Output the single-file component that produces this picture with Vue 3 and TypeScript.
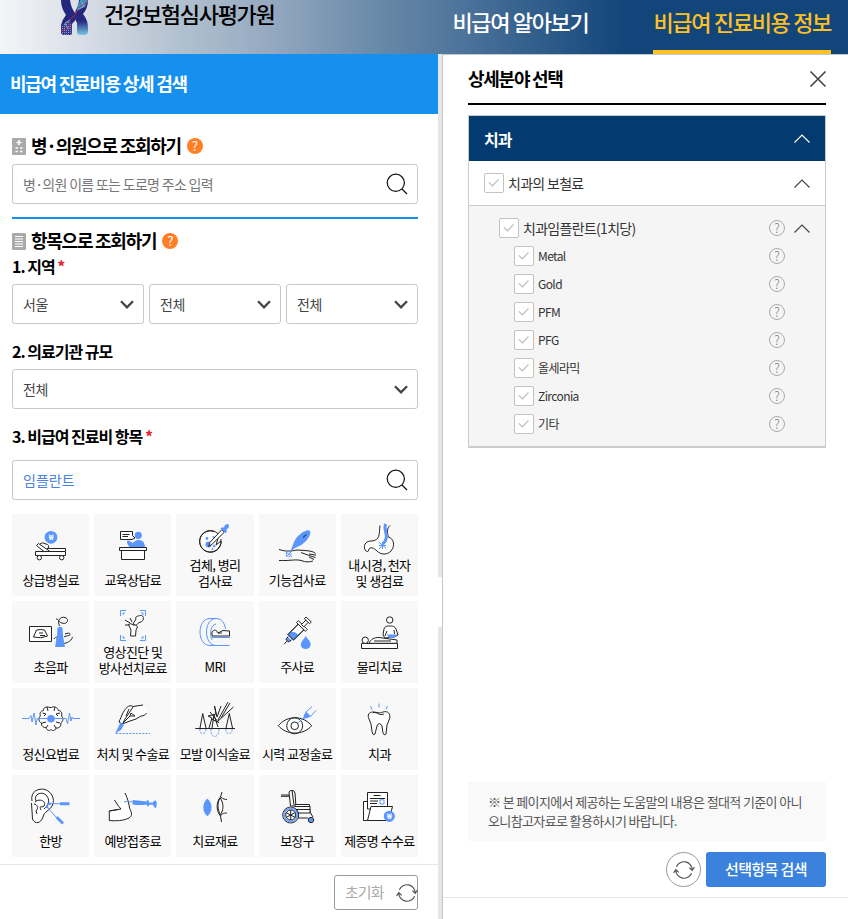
<script setup lang="ts">
import { ref } from 'vue'

type Kind = 'line' | 'paper' | 'blueLine' | 'blue' | 'dash' | 'thick'
interface Shape { k: Kind; d: string }
interface Category { label: string[]; shapes: Shape[]; won?: [number, number] }

const s = (k: Kind, d: string): Shape => ({ k, d })
const dot = (x: number, y: number, r: number): string =>
  `M${x - r} ${y}a${r} ${r} 0 1 0 ${2 * r} 0a${r} ${r} 0 1 0 ${-2 * r} 0Z`

const categories: Category[] = [
  { label: ['상급병실료'], won: [39, 23.3], shapes: [
    s('blue', dot(39, 23.3, 6.4)),
    s('paper', 'M35 37.5V34.5H53.5V37.5'), s('paper', 'M23.5 37.5H53.5V41.5H23.5Z'),
    s('paper', 'M24.5 31.5L26.5 29.5L38 37.5H32Z'), s('line', 'M28 30Q30 27.5 34 30Q38 31 36 34.5'),
    s('paper', dot(27.3, 43.7, 2.2)), s('paper', dot(49.7, 43.7, 2.2))] },
  { label: ['교육상담료'], shapes: [
    s('paper', 'M26.5 17.5H38.5V21.5L41 24L38 25.5H26.5Z'), s('line', 'M28.5 20.5H35.5M28.5 22.5H34'),
    s('blue', dot(44.3, 21.3, 3.6)),
    s('blue', 'M33 27.5C33 25.5 36 27 38.5 29L42 26.5C48 25 51 28 51 34H38C35 33.5 33 30 33 27.5Z'),
    s('paper', 'M27.5 36H50.5V45.5H27.5Z'), s('paper', 'M25.5 33.5H52.5V36.5H25.5Z')] },
  { label: ['검체, 병리', '검사료'], shapes: [
    s('paper', 'M43 21A10.7 10.7 0 1 0 45 27L40 31Z'), s('line', 'M38 17.5A10.7 10.7 0 1 0 44.8 25'),
    s('blue', dot(32.5, 30.5, 3)), s('blue', dot(31, 24.5, 1.4)), s('blue', dot(38.2, 32, 1.3)),
    s('blue', dot(36.5, 35, 1)), s('blue', dot(37.5, 23, 1)),
    s('paper', 'M45.8 15.7L48.3 18.2L36 30.3L32.7 32.5L34 28.3Z'),
    s('blue', 'M44.5 14.5L46.5 13L48 13.8C48.5 10.5 51 9.5 52.3 10.3C54 12 52.5 14.5 50.3 15.7L51 17.8L49.3 19Z')] },
  { label: ['기능검사료'], shapes: [
    s('line', 'M20 35.5C28 38 32 37 38 36L46 36.5C50 37 54 37 56.5 39.5M42 38.5L52 42.2L56.5 43.5M50 40L57 41.2M50 43L55 45.5M20 46.5C30 47 37 45 42 46.5C47 48.5 51 48 54 47'),
    s('blue', 'M31.5 37L35 28C38 22 43 17.5 48.5 16.2C51.5 15.8 52 18.5 50.5 22C47.5 27.5 42 32 37 33.5Z'),
    { k: 'paper', d: 'M44 23.5L47.5 20.5' },
    s('dash', dot(29.7, 40.2, 2.5)), s('blueLine', 'M26.7 37.5L33 43M33 37L27 43')] },
  { label: ['내시경, 천자', '및 생검료'], shapes: [
    s('paper', 'M39 11.5C38 21 39 26 31 27C25 27 23 30 23.5 34C24 38 28 38.5 27.5 36C29 32 33 34 36 37C40 41 46 41 50 37C55 31 52 24 47.3 23C46 18 46 14 49 11.5'),
    s('thick', 'M44.6 10C42 16 47 19 45 25C44 28 43 28 42 30'),
    s('blueLine', 'M37.5 28L45 34M44.5 28L38 35M41.5 29V35M38 31.5H45')] },
  { label: ['초음파'], shapes: [
    s('paper', 'M17.5 25.5H39.5V40.5H17.5Z'), s('line', 'M24.5 29Q29 28 32.5 29L35.5 35Q29 38 21.5 36ZM27 32H31M28 34.5H33'),
    s('line', 'M47.5 25C45 20 48 15 53 16.5C58 18 55 24 50 22C46 21 47 18 44 18M42 38C44 35 46 36 45 39M53 33C57 31 60 33 57 34.5C55 35 53 35 52 36M60.5 36C59 41 54 42 52 42.5'),
    s('blue', 'M45.5 27Q48 24.5 50.5 27L51 35L53 46H43L45 35Z')] },
  { label: ['영상진단 및', '방사선치료료'], shapes: [
    s('blueLine', 'M26.5 15V9.5H32M46 9.5H51.5V15M51.5 34V39.5H46M32 39.5H26.5V34M29 14V12H31M47 12H49V14M49 35V37H47M31 37H29V35'),
    s('paper', 'M39 23L42 18C40.5 15.5 44 15 46.5 14.5C50 14 50.5 19 47 21C44 21 43 24 42 24.5Z'),
    s('paper', 'M34.5 23.5Q37 21.5 39 24Q42 23 43.5 26L42 29L41.5 35H36.5L37 29Z'),
    s('line', 'M31 19L36 22M36 17L38 21M31 24L35 24')] },
  { label: ['MRI'], shapes: [
    s('blueLine', 'M40 44.5H34C27.5 44.5 24 38 24 31S27.5 17.5 34 17.5H40M40 44.5C34 44.5 30.5 38 30.5 31S34 17.5 40 17.5S48.5 22 49.5 28M36 39C33.5 34 34 24 40 23M36 36.5H54M38 44.5H53.5'),
    s('line', 'M36 35V31C38 28 41 29 42 32L47 29.5L53.5 30V35H36M42 32H46')] },
  { label: ['주사료'], shapes: [
    s('paper', 'M39.3 23L45 28.7L34.5 39L29 33.5Z'), s('blue', 'M36.5 31.5L39.5 34L34.5 39L29 33.5L32 30.5Z'),
    s('line', 'M39.3 23L29 33.5L34.5 39L45 28.7'),
    s('paper', 'M37.5 21.5L39.5 19.7L48.3 28.5L46.5 30.3Z'), s('paper', 'M42.5 23.5L47 19L49.3 21.3L44.8 25.8Z'),
    s('paper', 'M45.3 17.7L47 16L52.3 21L50.6 22.7Z'),
    s('blue', 'M28.5 35.5L32.5 39.5L29.5 41L27 38.5Z'), s('line', 'M29 35.5L27 38.5L29.5 41L32.5 39M28 40L25 43.3'),
    s('blue', 'M46.7 35C49 38.5 51.7 40.5 51.7 43.5C51.3 49.5 42 49.5 41.8 43.5C42 40.5 44.7 38.5 46.7 35Z')] },
  { label: ['물리치료'], shapes: [
    s('paper', 'M20.5 42.5H56.5V47.5H20.5Z'), s('paper', dot(24.2, 39.2, 3.2)),
    s('paper', 'M28 42.3C30 38 33 36.5 38 36.5L56 39V42.3ZM33 40H50'),
    s('paper', dot(48.7, 19, 3.2)), s('paper', 'M42 34L43 28C44 25 46 25 48.7 25S53.5 25 55 28L57 34L53 36L44 37Z'),
    s('line', 'M46 30L44 35M53 29L53.5 33'), s('blue', 'M46 33.5L56 33.5L53.5 37H48Z')] },
  { label: ['정신요법료'], shapes: [
    s('paper', 'M38 19.5C34 18 31 20 31.5 22.5C28 23 27.5 26 28.5 28C26 30 26.5 34 29.5 35C29 38 32 40 34 39.5C35 43 38 43 39 41.5C40 43 43.5 43 44 40C47 40.5 49.5 38 48.8 35C51.5 33 51.5 30 49.5 28C50.5 25 49 22.5 46.3 22.5C46 19 41 18 39.5 19.5Z'),
    s('line', 'M35 19L36 23M43 19L42 23M30.5 25L34 26L32 28M48 25L44 26L46 28M30 35L34 34M48 35L44 34M34 40L36 37M44 40L42 37'),
    s('blueLine', 'M10 30.5H17L19 27.5L20 34L22 25L24 37L25 30.5H54L55.5 36L57.5 25L59 33L60 29L61 30.5H68'),
    s('blue', dot(39, 30.7, 3.8))] },
  { label: ['처치 및 수술료'], shapes: [
    s('paper', 'M49 17L39 18.5C35 16 31 20 28 27L25 34L28 36L36 33L42 31L47 28C50 28 51 27 52.5 25'),
    s('line', 'M35 21L32 28M39 19L31 31L29 35M36 28L37 25L41 28H36L29 35'),
    s('blue', 'M26.5 34.5L30 36L27.5 41.5L21 45.8Z'), s('dash', 'M22 45.5H56')] },
  { label: ['모발 이식술료'], shapes: [
    s('line', 'M19.3 40.5H59M24 40L26.7 25.5L30 40M33 40L36 30L32 28L40 26L38.5 18L41 29L45 18M36 40L38 27L42 39M50 40L53.3 25.5L56.5 40M41 34L57.5 19M42 32L52 14M45 30L54 15M34 24L43 35M35 31L42 34'),
    s('dash', 'M24 41C23 47 30 47 30 41M35 41C34 51 43 51 43 41M50 41C49 47 57 47 56 41')] },
  { label: ['시력 교정술료'], shapes: [
    s('paper', 'M19.3 37.8C28 27 44 27 52.7 37.8C44 47.5 28 47.5 19.3 37.8Z'),
    s('line', dot(35.7, 37.8, 8)), s('line', dot(35.7, 37.8, 3.8)),
    s('blueLine', 'M39.5 34.5L45.5 29M47 24L53 18.5M51.5 28.5L57 22.5'),
    s('blue', 'M47 23.5L52 28.5L47.5 30.3L44.3 30.8L45 27Z')] },
  { label: ['치과'], shapes: [
    s('paper', 'M28 31C26 27 28 24 32 24C36 24 38 26 42 24C47 22.5 50 26 48.5 31L46 37L45 46Q43 48 42 45L41 38Q38 33 36 38L34 46Q31.5 48 31 43L30 36Z'),
    s('line', 'M32 24.5C37 24 38 28 43 26'), s('blueLine', 'M29.5 18L31 21.5M38 15.5V19.5M46.5 18L45 21.5')] },
  { label: ['한방'], shapes: [
    s('paper', 'M20 26C18 16 27 13 33 14.5C40 17 43 24 40.5 30C38 36 32 36 31 42C29 48 23 50 20.5 44L19.5 28'),
    s('line', 'M24 26C21 19 30 16 34 20C39 25 36 31 32 34M23 27C27 23 35 26 32 31C29 33 27 30 29 35M22 29C25 29 27 33 24 36L25 39'),
    s('blue', dot(37.3, 28.7, 1.5)), s('blue', dot(35, 31.8, 1.5)), s('blueLine', 'M38 28.7H48M35 32L44 42'),
    s('thick', 'M48 28.7H57.5M44.5 42L51 48.5')] },
  { label: ['예방접종료'], shapes: [
    s('paper', 'M31 18C34 24 35 29 35.5 33C38 38 38.5 41 35 43C29 46 22 46 15.3 45.5V36L24 34.5'),
    s('line', 'M15.3 36L27 34Q24 31 20.5 25'),
    s('blueLine', 'M30 26.7H38'), s('blue', 'M38.5 25Q46 25.5 53 26.5L53.2 29.5Q46 30.5 38.5 29.5ZM53 25.2Q55 24.5 55.2 28T54 31.5Q52 31 53 25.2ZM55 27.5H59Q59.5 25 62 25.7Q63.5 28 62 33Q60 33.5 59 29.8H55Z')] },
  { label: ['치료재료'], shapes: [
    s('blue', 'M31.3 23.5C37 28 37 37 31.3 41.2C26 37 26 28 31.3 23.5Z'),
    s('line', 'M46 17L44.5 22C40 27 40 36 44.5 41L45.5 47M44.5 22C47 24 49 24.5 51 24.5M44.5 41C46 38 49 38 51 38M44 23C48 28 48 35 44 40M43.5 24C41 29 42 35 44 39')] },
  { label: ['보장구'], shapes: [
    s('line', 'M22 20H30M22 21.3H30M30 17Q31 15 33 15.5L35 30M30 17L31.5 31M33 15.5Q35 15 36 18L37 32M31.5 31H51V37L54 42'),
    s('paper', 'M36 29.5H50.5V31.5H36Z'), s('paper', 'M37 34.5H51V38H39Z'), s('line', 'M39 43H49'),
    s('line', dot(31.7, 40, 8)), s('blueLine', dot(31.7, 40, 7)), s('blueLine', dot(31.7, 40, 6.2)), s('line', dot(31.7, 40, 5)),
    s('line', 'M31.7 35V45M27 37.5L36.3 42.5M36.3 37.5L27 42.5'), s('blue', dot(52, 45, 2.3)), s('line', dot(52, 45, 2.7))] },
  { label: ['제증명 수수료'], won: [48.3, 41.3], shapes: [
    s('paper', 'M22.5 45.5V26.5H30V45.5Z'), s('paper', 'M26.5 17.5H46.5V34H26.5Z'),
    s('line', 'M32.5 20.5H39.5M29 23.5H44M29 26H37M29 28.5H36'), s('blueLine', 'M39 24.8H43V29H39Z'),
    s('paper', 'M26.5 45.5L30 31.5H51.5L48 45.5Z'), s('blue', dot(48.3, 41.3, 5.6))] },
]

const regions = ['서울', '전체', '전체']
const items = ['Metal', 'Gold', 'PFM', 'PFG', '올세라믹', 'Zirconia', '기타']
const cycle = 'M2.4 6.8A8.25 8.25 0 0 1 18.25 10M17.6 13.2A8.25 8.25 0 0 1 1.75 10M15.3 7.6L18.2 10.3L20.4 7.2M4.7 12.4L1.8 9.7L-.4 12.8'
const hospital = ref('')
const keyword = ref('임플란트')
</script>

<template>
  <div class="page">
    <header class="top">
      <div class="brand">
        <svg class="emblem" width="30" height="36" viewBox="0 0 30 36">
          <defs>
            <linearGradient id="leg" x1="0" y1="0" x2="0" y2="1">
              <stop offset="0" stop-color="#25267e" /><stop offset=".6" stop-color="#27277f" /><stop offset="1" stop-color="#72cbe4" />
            </linearGradient>
            <pattern id="mesh" width="2" height="2" patternUnits="userSpaceOnUse">
              <rect width="2" height="2" fill="#34398c" /><rect width="1" height="1" fill="#8f9bcb" />
            </pattern>
          </defs>
          <path d="M1 0H10Q11 8 15 13Q18 19 12 24V33Q12 35 9 35H4Q1 35 1 31V25Q2 20 6 15Q1 8 1 0Z" fill="#25267e" />
          <path d="M28 0Q28 8 23 14Q28 20 28 28V31Q28 35 24 35H20Q17 35 17 31V23Q13 16 16 10Q19 5 19 0Z" fill="url(#leg)" />
          <path d="M1 26L9 20L12 25V33Q11 35 5 35Q1 35 1 31Z" fill="url(#mesh)" />
          <path d="M20 0H28L25 7L18 10L17 8Z" fill="#488bb6" />
          <path d="M28 2L20 7L14 16L7 22L10 27L1 31" fill="none" stroke="#c62450" stroke-width=".9" />
          <path d="M21 1L24 6L17 10M10 20L5 23L8 29" fill="none" stroke="#62bfd8" stroke-width=".9" />
        </svg>
        <span class="brand-name">건강보험심사평가원</span>
      </div>
      <nav class="menu">
        <a>비급여 알아보기</a>
        <a class="current">비급여 진료비용 정보</a>
      </nav>
    </header>

    <main class="body">
      <section class="search">
        <h1 class="bar">비급여 진료비용 상세 검색</h1>
        <div class="form">
          <h2 class="heading first">
            <svg width="14" height="17" viewBox="0 0 14 17"><rect width="14" height="17" rx="1" fill="#aaa" /><path d="M7 2V7M4.5 4.5H9.5M3.5 10H6M8 10H10.5M3.5 13.5H6M8 13.5H10.5" stroke="#fff" stroke-width="1.6" /></svg>
            <span>병·의원으로 조회하기</span><i class="hint">?</i>
          </h2>
          <label class="field">
            <input v-model="hospital" class="hospital" placeholder="병·의원 이름 또는 도로명 주소 입력">
            <svg width="22" height="22" viewBox="0 0 22 22"><circle cx="9.8" cy="9.8" r="8.6" /><path d="M16 16L21 21" /></svg>
          </label>
          <h2 class="heading second">
            <svg width="14" height="17" viewBox="0 0 14 17"><rect width="14" height="17" rx="1" fill="#aaa" /><path d="M3 3.5H11M3 6H11M3 8.5H11M3 11H11M3 13.5H11" stroke="#fff" /></svg>
            <span>항목으로 조회하기</span><i class="hint">?</i>
          </h2>
          <h3 class="label">1. 지역 <em>*</em></h3>
          <div class="selects">
            <div v-for="(r, i) in regions" :key="i" class="select"><span>{{ r }}</span><svg width="14" height="9" viewBox="0 0 14 9"><path d="M1 1.3L7 7.3L13 1.3" /></svg></div>
          </div>
          <h3 class="label gap">2. 의료기관 규모</h3>
          <div class="selects"><div class="select"><span>전체</span><svg width="14" height="9" viewBox="0 0 14 9"><path d="M1 1.3L7 7.3L13 1.3" /></svg></div></div>
          <h3 class="label gap">3. 비급여 진료비 항목 <em>*</em></h3>
          <label class="field item">
            <input v-model="keyword" class="keyword">
            <svg width="22" height="22" viewBox="0 0 22 22"><circle cx="9.8" cy="9.8" r="8.6" /><path d="M16 16L21 21" /></svg>
          </label>
          <div class="grid">
            <button v-for="c in categories" :key="c.label[0]" class="card">
              <svg class="pic" width="77" :height="c.label.length > 1 ? 43 : 58" :viewBox="`0 0 77 ${c.label.length > 1 ? 43 : 58}`">
                <path v-for="(p, i) in c.shapes" :key="i" :class="p.k" :d="p.d" />
                <text v-if="c.won" :x="c.won[0]" :y="c.won[1] + 3">₩</text>
              </svg>
              <span v-for="l in c.label" :key="l">{{ l }}</span>
            </button>
          </div>
        </div>
        <footer class="actions">
          <button class="reset"><span>초기화</span>
            <svg class="cycle" width="20" height="20" viewBox="0 0 20 20"><path :d="cycle" /></svg>
          </button>
        </footer>
      </section>

      <div class="rail"><span class="rail-gap"></span></div>

      <section class="detail">
        <div class="detail-main">
          <h2 class="detail-title"><span>상세분야 선택</span>
            <svg width="16" height="16" viewBox="0 0 16 16"><path d="M.5 .5L15.5 15.5M15.5 .5L.5 15.5" /></svg>
          </h2>
          <div class="tree">
            <div class="node root"><span>치과</span><svg class="arrow" width="16" height="9" viewBox="0 0 16 9"><path d="M.5 8.5L8 1L15.5 8.5" /></svg></div>
            <div class="node sub"><i class="check"><svg viewBox="0 0 20 20"><path d="M4.3 9.3L8.3 13.2L15 6" /></svg></i><span>치과의 보철료</span><svg class="arrow" width="16" height="9" viewBox="0 0 16 9"><path d="M.5 8.5L8 1L15.5 8.5" /></svg></div>
            <div class="leafs">
              <div class="node group"><i class="check"><svg viewBox="0 0 20 20"><path d="M4.3 9.3L8.3 13.2L15 6" /></svg></i><span>치과임플란트(1치당)</span><i class="help">?</i><svg class="arrow" width="16" height="9" viewBox="0 0 16 9"><path d="M.5 8.5L8 1L15.5 8.5" /></svg></div>
              <div v-for="t in items" :key="t" class="node leaf"><i class="check"><svg viewBox="0 0 20 20"><path d="M4.3 9.3L8.3 13.2L15 6" /></svg></i><span>{{ t }}</span><i class="help">?</i></div>
            </div>
          </div>
          <p class="notice">※ 본 페이지에서 제공하는 도움말의 내용은 절대적 기준이 아니<br>오니참고자료로 활용하시기 바랍니다.</p>
          <div class="buttons">
            <button class="round"><svg class="cycle" width="20" height="20" viewBox="0 0 20 20"><path :d="cycle" /></svg></button>
            <button class="go">선택항목 검색</button>
          </div>
        </div>
      </section>
    </main>
  </div>
</template>

<style>
body { overflow: hidden; background: #fff; }
</style>

<style scoped>
* { box-sizing: border-box; margin: 0; padding: 0; }
.page { width: 848px; height: 919px; overflow: hidden; display: flex; flex-direction: column; font-family: "Noto Sans CJK KR", "Noto Sans", sans-serif; letter-spacing: -0.96px; color: #000; }
button, input { font: inherit; letter-spacing: inherit; border: 0; background: none; outline: 0; }
svg { display: block; flex: none; overflow: visible; }
i, em { font-style: normal; }

.top { height: 54px; flex: none; display: flex; justify-content: space-between; background: linear-gradient(90deg, #f4f5f7 0, #dfe3eb 65px, #b2c1cf 180px, #93a7bf 275px, #6b8caa 370px, #557a9f 438px, #12457a 625px); }
.brand { display: flex; padding-left: 60px; }
.brand-name { height: 36px; margin-left: 5px; padding-left: 8px; border-left: 1px solid #d4dce5; font-size: 22px; font-weight: 500; line-height: 27px; letter-spacing: -1.3px; white-space: nowrap; }
.menu { display: flex; gap: 65px; padding-right: 17px; font-size: 22px; font-weight: 500; line-height: 42px; letter-spacing: -1.32px; color: #fff; white-space: nowrap; }
.current { color: #ffc022; border-bottom: 4px solid #ffc022; }

.body { flex: 1; min-height: 0; display: flex; }
.search { width: 438px; flex: none; display: flex; flex-direction: column; }
.bar { height: 60px; padding-left: 10px; background: #1590ef; color: #fff; font-size: 18px; font-weight: 700; line-height: 58px; letter-spacing: -1.26px; }
.form { padding: 0 20px 0 12px; }
.heading { display: flex; align-items: center; font-size: 18px; font-weight: 700; letter-spacing: -1.26px; }
.heading span { margin-left: 5px; padding-bottom: 2px; line-height: 24px; }
.heading.first { height: 28px; margin-top: 18px; }
.heading.second { margin-top: 13px; height: 37px; padding-top: 9px; border-top: 2px solid #1590ef; }
.hint { width: 16px; height: 16px; margin-left: 6px; border-radius: 50%; background: #ff7f27; color: #fff; font: 400 13px/15px "Noto Sans CJK KR", sans-serif; letter-spacing: 0; text-align: center; }
.field { display: flex; align-items: center; justify-content: space-between; height: 40px; margin-top: 4px; padding: 0 9px 0 10px; border: 1px solid #c8c8c8; border-radius: 3px; }
.field.item { margin-top: 10px; }
.field svg { fill: none; stroke: #111; stroke-width: 1.2; }
.hospital { width: 300px; font-size: 14px; letter-spacing: -.7px; color: #777; }
.hospital::placeholder { color: #777; opacity: 1; }
.keyword { width: 300px; font-size: 14px; letter-spacing: 0; color: #4a82dc; }
.label { height: 26px; line-height: 24px; font-size: 16px; font-weight: 700; letter-spacing: -1px; white-space: nowrap; }
.label.gap { margin-top: 15px; }
.label em { color: #e8262d; }
.selects { display: flex; gap: 5px; margin-top: 4px; }
.select { flex: 1; display: flex; align-items: center; justify-content: space-between; height: 40px; padding: 0 9px 0 10px; border: 1px solid #c8c8c8; border-radius: 3px; font-size: 14px; letter-spacing: -.3px; color: #444; }
.select span { padding-bottom: 1px; }
.select svg { fill: none; stroke: #444; stroke-width: 2.3; }
.grid { display: grid; grid-template-columns: repeat(5, 1fr); gap: 5px; margin-top: 14px; }
.card { height: 82px; display: flex; flex-direction: column; align-items: center; background: #f8f8f8; font-size: 13px; line-height: 16px; letter-spacing: -.6px; color: #000; white-space: nowrap; }
.pic path { fill: none; stroke: #222; stroke-width: 1; stroke-linejoin: round; }
.pic .paper { fill: #fff; }
.pic .blueLine { stroke: #5b96ff; }
.pic .blue { fill: #5b96ff; stroke: none; }
.pic .dash { stroke: #5b96ff; stroke-dasharray: 2 1.3; }
.pic .thick { stroke: #5b96ff; stroke-width: 3; }
.pic text { fill: #fff; font-size: 8px; font-weight: 700; text-anchor: middle; letter-spacing: 0; }
.actions { display: flex; justify-content: flex-end; margin-top: 7px; padding: 10px 20px 0 0; border-top: 1px solid #e6e6e6; }
.reset { display: flex; align-items: center; justify-content: space-between; width: 84px; height: 35px; padding-left: 10px; border: 1px solid #999; border-radius: 3px; font-size: 15px; color: #aaa; }
.reset span { padding-bottom: 2px; }
.cycle { fill: none; stroke: #555; stroke-width: 1.2; }

.rail { width: 5px; flex: none; padding-top: 523px; border-right: 1px solid #c5c6c8; background: #e6e6e6; }
.rail-gap { display: block; height: 50px; background: #fff; }

.detail { flex: 1; }
.detail-main { height: 844px; padding: 0 22px 0 25px; border-top: 1px solid #c5c6c8; border-bottom: 1px solid #e6e6e6; display: flex; flex-direction: column; }
.detail-title { display: flex; align-items: center; justify-content: space-between; height: 50px; flex: none; border-bottom: 2px solid #000; font-size: 18px; font-weight: 700; letter-spacing: -1.26px; }
.detail-title span { padding-bottom: 2px; }
.detail-title svg { fill: none; stroke: #444; stroke-width: 1.6; }
.tree { margin-top: 10px; border: 1px solid #ccc; border-bottom-width: 2px; }
.node { display: flex; align-items: center; color: #333; font-size: 14px; letter-spacing: -.7px; }
.node .arrow { margin-left: auto; fill: none; stroke: #444; stroke-width: 1.2; }
.root { height: 45px; padding: 0 15px; background: #033a6f; color: #fff; font-size: 16px; font-weight: 700; letter-spacing: -.9px; }
.root .arrow { stroke: #fff; }
.sub { height: 45px; padding: 0 15px; border-bottom: 1px solid #ccc; }
.sub span, .leaf span { padding-bottom: 1px; }
.leafs { height: 240px; padding: 8px 15px 0 30px; background: #f5f5f5; }
.group, .leaf { height: 28px; }
.leaf { padding: 0 25px 0 15px; font-size: 12px; letter-spacing: -.6px; }
.check { width: 20px; height: 20px; flex: none; margin-right: 4px; border: 1px solid #c3c3c3; border-radius: 2px; background: #fff; }
.check svg { width: 18px; height: 18px; fill: none; stroke: #bbb; stroke-width: 1.3; }
.help { width: 16px; height: 16px; margin-left: auto; border: 1px solid #aaa; border-radius: 50%; font-size: 13px; font-weight: 300; line-height: 13px; letter-spacing: 0; text-align: center; color: #888; }
.group .arrow { margin-left: 9px; }
.notice { margin-top: auto; height: 59px; flex: none; padding: 10px 20px; background: #f9f9f9; color: #555; font-size: 13px; line-height: 19px; letter-spacing: -.63px; white-space: nowrap; }
.buttons { display: flex; justify-content: flex-end; gap: 5px; padding: 11px 0 10px; }
.round { width: 35px; height: 35px; display: flex; align-items: center; justify-content: center; border: 1px solid #999; border-radius: 50%; }
.go { width: 120px; height: 35px; padding-bottom: 2px; border-radius: 3px; background: #3b82dc; color: #fff; font-size: 15px; font-weight: 500; letter-spacing: -.6px; }
</style>
